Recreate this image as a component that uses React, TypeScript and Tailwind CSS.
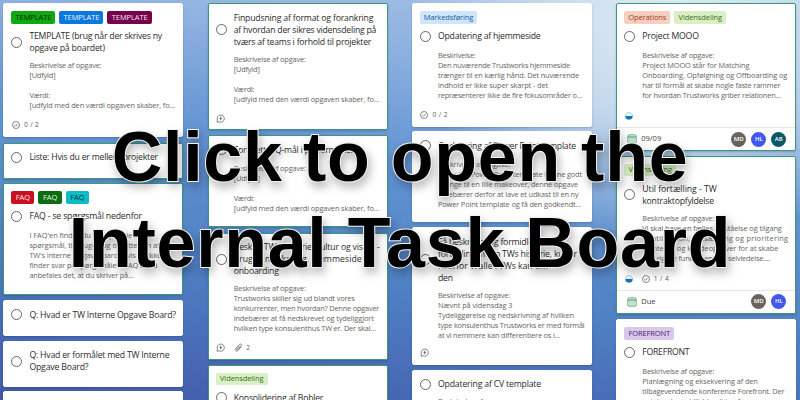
import { useLayoutEffect, useRef, type ReactNode } from "react";

type Row = [text: string, width?: number];
type Tag = { label: string; tone: string };
type Person = { initials: string; tone: string };
type Task = {
  size: string;
  framed?: boolean;
  tags?: Tag[];
  title: Row[];
  bodyGap?: string;
  body?: Row[];
  meta?: ReactNode;
  due?: string;
  people?: Person[];
};

/* One line of text, tracked so that it spans the given width. */
function Line({ row, className }: { row: Row; className: string }) {
  const ref = useRef<HTMLSpanElement>(null);
  const [text, width] = row;
  useLayoutEffect(() => {
    const el = ref.current;
    if (!el || !width) return;
    el.style.letterSpacing = "0px";
    const natural = el.getBoundingClientRect().width;
    el.style.letterSpacing = `${(width - natural) / text.length}px`;
  }, [text, width]);
  return (
    <div className={className}>
      <span ref={ref} className="inline-block whitespace-pre tracking-[-0.1px]">{text}</span>
    </div>
  );
}

function Check({ label }: { label: string }) {
  return (
    <span className="flex items-center gap-[4px]">
      <svg width="8" height="8" viewBox="0 0 16 16" fill="none" stroke="#555" strokeWidth="1.4">
        <circle cx="8" cy="8" r="7" />
        <path d="M4.8 8.3l2.3 2.3 4.3-4.7" />
      </svg>
      <span className="text-[6.6px] leading-[8px] tracking-[0.4px] text-[#5c5c5c]">{label}</span>
    </span>
  );
}

function Comment() {
  return (
    <svg width="9" height="9" viewBox="0 0 18 18" fill="none" stroke="#555" strokeWidth="1.4">
      <path d="M2 16.5l.9-4.2A7.2 7.2 0 1 1 6 15.6z" strokeLinejoin="round" />
      <path d="M10.3 5.2L7 9.3h2.3l-.7 3.5 3.4-4.4H9.7z" fill="#555" strokeWidth=".5" />
    </svg>
  );
}

function Clip({ label }: { label: string }) {
  return (
    <span className="ml-[9px] flex items-center gap-[3px]">
      <svg width="9" height="9" viewBox="0 0 18 18" fill="none" stroke="#555" strokeWidth="1.4" strokeLinecap="round">
        <path d="M13.8 8.5l-5.6 6.2c-1.3 1.4-3.3 1.7-4.6.5s-1.2-3.1.1-4.6l7.1-7.8c1-1 2.5-1.2 3.5-.3s1 2.3.1 3.4l-6.8 7.4c-.5.6-1.3.7-1.8.2s-.5-1.2 0-1.8L11 6.2" />
      </svg>
      <span className="text-[6.8px] leading-[8px] text-[#5c5c5c]">{label}</span>
    </span>
  );
}

function Progress() {
  return (
    <svg width="8" height="8" viewBox="0 0 16 16">
      <circle cx="8" cy="8" r="7.2" fill="#e8f3fb" stroke="#73b4df" strokeWidth="1" />
      <path d="M.8 8h14.4a7.2 7.2 0 0 1-14.4 0z" fill="#1474b8" />
    </svg>
  );
}

function Calendar() {
  return (
    <svg width="10" height="10" viewBox="0 0 20 20" fill="none" stroke="#4d9a6b" strokeWidth="1.5">
      <rect x="1.5" y="1.5" width="17" height="17" rx="3" fill="#dcefe2" />
      <path d="M2 6h16" strokeWidth="2.2" />
      <path d="M5 10h2m2 0h2m2 0h2M5 14h2m2 0h2m2 0h2" />
    </svg>
  );
}

const VIDEN: Tag = { label: "Vidensdeling", tone: "w-[52px] bg-[#d9f0c6] text-[#3d6d20]" };
const MD: Person = { initials: "MD", tone: "bg-[#69635f]" };
const HL: Person = { initials: "HL", tone: "bg-[#4158ee]" };
const AB: Person = { initials: "AB", tone: "bg-[#0b5766]" };
const FILL: Row[] = [["Beskrivelse af opgave:", 72], ["[Udfyld]", 26], [" "], ["Værdi:", 20.5], ["[udfyld med den værdi opgaven skaber, fo...", 145.5]];

const columns: Task[][] = [
  [
    {
      size: "h-[134px] mb-[5.5px]",
      tags: [
        { label: "TEMPLATE", tone: "w-[44px] bg-[#11a911] text-[#062d06]" },
        { label: "TEMPLATE", tone: "w-[44px] bg-[#0b78dd] text-[#e9f4ff]" },
        { label: "TEMPLATE", tone: "w-[44.5px] bg-[#77004d] text-[#f8e5f1]" },
      ],
      title: [["TEMPLATE (brug når der skrives ny", 132.5], ["opgave på boardet)", 75.5]],
      body: FILL,
      meta: <Check label="0 / 2" />,
    },
    { size: "h-[36px] mb-[4.5px]", framed: true, title: [["Liste: Hvis du er mellem projekter", 128.5]] },
    {
      size: "h-[112px] mb-[5px]",
      framed: true,
      tags: [
        { label: "FAQ", tone: "w-[23px] bg-[#cb0f22] text-[#ffe9e9]" },
        { label: "FAQ", tone: "w-[23.5px] bg-[#0b6b10] text-[#e4f6e4]" },
        { label: "FAQ", tone: "w-[23px] bg-[#0cbcc8] text-[#043438]" },
      ],
      title: [["FAQ - se spørgsmål nedenfor", 112.5]],
      body: [
        ["I FAQ'en finder du svar på relevante", 122],
        ["spørgsmål, til brugen og oprettelsen af", 130],
        ["TW's Interne Opgaveboard. Hvis du ikke", 132],
        ["finder svar på spørgsmålet i FAQ'en så", 128],
        ["anbefales det, at du skriver på...", 104],
      ],
    },
    { size: "h-[36px] mb-[4.5px]", title: [["Q: Hvad er TW Interne Opgave Board?", 146.5]] },
    { size: "h-[46px] mb-[4.5px]", title: [["Q: Hvad er formålet med TW Interne", 140], ["Opgave Board?", 59]] },
    { size: "h-[50px]", title: [["Q: Hvem kan oprette opgaver?"]] },
  ],
  [
    {
      size: "h-[127px] mb-[5px]",
      framed: true,
      title: [["Finpudsning af format og forankring", 139.5], ["af hvordan der sikres vidensdeling på", 142.5], ["tværs af teams i forhold til projekter", 137.5]],
      body: FILL,
      meta: <Comment />,
    },
    { size: "h-[92px] mb-[5.5px]", framed: true, title: [["Fortsætte IQ-mål i performance", 121]], body: FILL },
    {
      size: "h-[127px] mb-[5px]",
      framed: true,
      title: [["Beskriv TWs historie, kultur og vision -", 146], ["brug til marketing, hjemmeside", 128], ["onboarding", 45]],
      body: [
        ["Beskrivelse af opgave:", 72],
        ["Trustworks skiller sig ud blandt vores", 121],
        ["konkurrenter, men hvordan? Denne opgaver", 145.5],
        ["indebærer at få nedskrevet og tydeliggjort", 140],
        ["hvilken type konsulenthus TW er. Der skal...", 142],
      ],
      meta: (
        <>
          <Comment />
          <Clip label="2" />
        </>
      ),
    },
    { size: "h-[80px]", framed: true, tags: [VIDEN], title: [["Konsolidering af Bobler", 89.5]] },
  ],
  [
    {
      size: "h-[123.5px] mb-[4.5px]",
      tags: [{ label: "Markedsføring", tone: "w-[57px] bg-[#cfe6fa] text-[#155f9f]" }],
      title: [["Opdatering af hjemmeside", 102.5]],
      body: [
        ["Beskrivelse:", 37.5],
        ["Den nuværende Trustworks hjemmeside", 132],
        ["trænger til en kærlig hånd. Det nuværende", 141],
        ["indhold er ikke super skarpt - det", 110],
        ["repræsenterer ikke de fire fokusområder o...", 144],
      ],
      meta: <Check label="0 / 2" />,
    },
    {
      size: "h-[91px] mb-[5px]",
      title: [["Opdatering af Power Point template", 138]],
      body: [
        ["Beskrivelse af opgave:", 72],
        ["Vores TW Power Point template kunne godt", 144],
        ["trænge til en lille makeover, denne opgave", 140],
        ["indebærer derfor at lave et udkast til en ny", 140.5],
        ["Power Point template og få den godkendt...", 143],
      ],
    },
    {
      size: "h-[137.5px] mb-[5px]",
      title: [["Få beskrevet og formidlet", 98], ["fortællingen om TWs historie, kultur", 139], ["hvorfor vi alle i TWs kan om", 110], ["den", 15]],
      body: [
        ["Beskrivelse af opgave:", 72],
        ["Nævnt på vidensdag 3", 74.5],
        ["Tydeliggørelse og nedskrivning af hvilken", 136],
        ["type konsulenthus Trustworks er med formål", 146.5],
        ["at vi nemmere kan differentiere os i...", 122],
      ],
      meta: <Comment />,
    },
    { size: "h-[80px]", title: [["Opdatering af CV template", 103]], bodyGap: "mt-[6px]", body: [["Beskrivelse af opgave:", 72]] },
  ],
  [
    {
      size: "h-[148px] mb-[4.5px]",
      framed: true,
      tags: [{ label: "Operations", tone: "w-[46px] bg-[#f6cfc0] text-[#a04022]" }, VIDEN],
      title: [["Project MOOO", 56.5]],
      body: [
        ["Beskrivelse af opgave:", 72],
        ["Project MOOO står for Matching", 107],
        ["Onboarding, Opfølgning og Offboarding og", 145],
        ["har til formål at skabe nogle faste rammer", 138],
        ["for hvordan Trustworks griber relationen...", 138.5],
      ],
      meta: <Progress />,
      due: "09/09",
      people: [MD, HL, AB],
    },
    {
      size: "h-[158px] mb-[5.5px]",
      framed: true,
      tags: [VIDEN],
      title: [["Util fortælling - TW", 74.5], ["kontraktopfyldelse", 71.5]],
      body: [
        ["Beskrivelse af opgave:", 72],
        ["Vi skal have en fælles forståelse og tilgang", 139.5],
        ["til utilization, omsætning og prioritering", 146],
        ["af interne og kundeopgaver for at skabe", 136],
        ["den rigtige fundament for selvledelse....", 128],
      ],
      meta: (
        <span className="flex gap-[9px]">
          <Progress />
          <Check label="1 / 4" />
        </span>
      ),
      due: "Due",
      people: [MD, HL],
    },
    {
      size: "h-[120px]",
      tags: [{ label: "FOREFRONT", tone: "w-[50px] bg-[#d9c8ec] text-[#4a2672]" }],
      title: [["FOREFRONT", 47]],
      body: [
        ["Beskrivelse af opgave:", 72],
        ["Planlægning og eksekvering af den", 115.5],
        ["tilbagevendende konference Forefront. Der", 142],
        ["er internt overblik blandt konference", 120],
      ],
    },
  ],
];

function Card({ task }: { task: Task }) {
  const single = task.title.length === 1;
  return (
    <article
      className={`flex w-[180px] shrink-0 flex-col rounded-[2px] border bg-white shadow-[0_1px_2px_rgba(20,40,90,0.25)] ${task.framed ? "border-[#3d9a74]" : "border-white"} ${task.size}`}
    >
      {task.tags && (
        <div className="mt-[7px] -mb-px flex h-[12.5px] gap-[4px] pl-[7px]">
          {task.tags.map((tag, i) => (
            <span key={i} className={`flex items-center justify-center rounded-[2px] text-[7.5px] leading-none tracking-[-0.1px] ${tag.tone}`}>
              {tag.label}
            </span>
          ))}
        </div>
      )}
      <div className="mt-[7.5px] flex items-center pl-[7px]">
        <span className="mr-[7px] size-[11px] shrink-0 rounded-full border border-[#666]" />
        <div>
          {task.title.map((row, i) => (
            <Line key={i} row={row} className="h-[12px] text-[8.7px] leading-[12px] text-[#2c2c2c]" />
          ))}
        </div>
      </div>
      {task.body && (
        <div className={`pl-[25px] ${task.bodyGap ?? (single ? "mt-[7.5px]" : "mt-[6px]")}`}>
          {task.body.map((row, i) => (
            <Line key={i} row={row} className="h-[10px] text-[7.4px] leading-[10px] text-[#666]" />
          ))}
        </div>
      )}
      {task.meta && <div className="mt-auto mb-[6.5px] flex h-[9px] items-center pl-[7.5px]">{task.meta}</div>}
      {task.due && (
        <div className="flex h-[23px] shrink-0 items-center border-t border-[#e6e6e6] pr-[9px] pl-[10px]">
          <Calendar />
          <span className="ml-[4px] text-[7.5px] text-[#424242]">{task.due}</span>
          <div className="ml-auto flex gap-[5px]">
            {task.people?.map((p) => (
              <span key={p.initials} className={`flex size-[15px] items-center justify-center rounded-full text-[6px] font-semibold text-white ${p.tone}`}>
                {p.initials}
              </span>
            ))}
          </div>
        </div>
      )}
    </article>
  );
}

export default function App() {
  return (
    <main className="relative h-[400px] w-[800px] overflow-hidden bg-[radial-gradient(ellipse_260px_230px_at_670px_20px,#e0ecf5_0%,rgba(208,225,239,0.85)_45%,transparent_100%),linear-gradient(188deg,#adc6e8_0%,#8fb2e0_20%,#6394d2_42%,#4f80c4_68%,#4159a7_100%)] font-['Open_Sans','Noto_Sans',sans-serif]">
      <div className="flex gap-[24.3px] pt-[3px] pl-[3.4px]">
        {columns.map((tasks, i) => (
          <section key={i} className="flex w-[180px] shrink-0 flex-col">
            {tasks.map((task, j) => (
              <Card key={j} task={task} />
            ))}
          </section>
        ))}
      </div>
      <h1 className="absolute inset-x-0 top-[114px] flex flex-col items-center font-['Liberation_Sans',Arial,sans-serif] text-[70px] leading-[86px] font-bold tracking-[0.75px] whitespace-nowrap text-black [-webkit-text-stroke:2px_#f2f2f2] [paint-order:stroke_fill] [filter:drop-shadow(2px_5px_5px_rgba(0,0,0,0.28))]">
        <span>Click to open the</span>
        <span>Internal Task Board</span>
      </h1>
    </main>
  );
}
